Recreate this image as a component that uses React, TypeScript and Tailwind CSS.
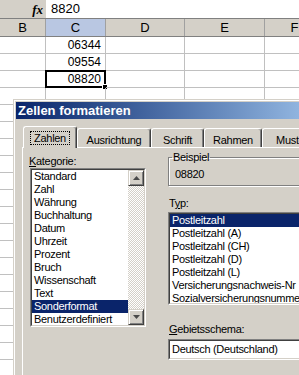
import React from 'react';

const columns = [
  { letter: 'B', width: 'w-[46px]' },
  { letter: 'C', width: 'w-[60px]' },
  { letter: 'D', width: 'w-[79px]' },
  { letter: 'E', width: 'w-[80px]' },
  { letter: 'F', width: 'w-[60px]' },
];

const values: Record<number, string> = { 0: '06344', 1: '09554', 2: '08820' };
const rows = Array.from({ length: 20 }, (_, i) => i);

const kategorien = [
  'Standard',
  'Zahl',
  'Währung',
  'Buchhaltung',
  'Datum',
  'Uhrzeit',
  'Prozent',
  'Bruch',
  'Wissenschaft',
  'Text',
  'Sonderformat',
  'Benutzerdefiniert',
];

const typen = [
  'Postleitzahl',
  'Postleitzahl (A)',
  'Postleitzahl (CH)',
  'Postleitzahl (D)',
  'Postleitzahl (L)',
  'Versicherungsnachweis-Nr',
  'Sozialversicherungsnummer',
];

const tabs = [
  { label: 'Zahlen', width: 'w-[54px]', active: true },
  { label: 'Ausrichtung', width: 'w-[74px]' },
  { label: 'Schrift', width: 'w-[53px]' },
  { label: 'Rahmen', width: 'w-[58px]' },
  { label: 'Muster', width: 'w-[60px]' },
];

function Sheet() {
  return (
    <div className="flex flex-col">
      {/* formula bar */}
      <div className="flex h-[19px] border-b border-[#808080] bg-[#d4d0c8]">
        <div className="w-[46px] shrink-0 flex items-center justify-end pr-[3px]">
          <span className="font-['Liberation_Serif',serif] italic font-bold text-[13px] leading-none">fx</span>
        </div>
        <div className="flex-1 bg-white flex items-center pl-[5px] text-[13px]">8820</div>
      </div>
      {/* column headers */}
      <div className="flex h-[18px] border-b border-[#808080] bg-[#d4d0c8]">
        {columns.map((c) => (
          <div
            key={c.letter}
            className={`${c.width} shrink-0 border-r border-[#a0a0a0] flex items-center justify-center text-[13px] ${
              c.letter === 'C' ? 'bg-[#b9c7e2]' : ''
            }`}
          >
            {c.letter}
          </div>
        ))}
      </div>
      {rows.map((r) => (
        <div key={r} className="flex h-[17px]">
          {columns.map((c) => (
            <div
              key={c.letter}
              className={`${c.width} shrink-0 relative border-r border-b border-[#c0c0c0] flex items-center justify-end pr-[4px] text-[12px]`}
            >
              {c.letter === 'C' && values[r]}
              {c.letter === 'C' && r === 2 && (
                <>
                  <div className="absolute -left-px -top-px w-[61px] h-[18px] border-2 border-black" />
                  <div className="absolute -right-[3px] -bottom-[3px] w-[6px] h-[6px] bg-black border border-white" />
                </>
              )}
            </div>
          ))}
        </div>
      ))}
    </div>
  );
}

function Arrow({ up }: { up?: boolean }) {
  return (
    <svg width="7" height="4" viewBox="0 0 7 4">
      {up ? <path d="M3.5 0 L7 4 L0 4 Z" fill="#4a4a4a" /> : <path d="M0 0 L7 0 L3.5 4 Z" fill="#4a4a4a" />}
    </svg>
  );
}

function ScrollButton({ up }: { up?: boolean }) {
  return (
    <div className="h-[16px] shrink-0 bg-[#d4d0c8] border border-t-[#d4d0c8] border-l-[#d4d0c8] border-r-[#404040] border-b-[#404040] shadow-[inset_1px_1px_0_#fff,inset_-1px_-1px_0_#808080] flex items-center justify-center">
      <Arrow up={up} />
    </div>
  );
}

function ListBox({
  items,
  selected,
  className,
  scroll,
}: {
  items: string[];
  selected: string;
  className: string;
  scroll?: boolean;
}) {
  return (
    <div className={`border border-t-[#808080] border-l-[#808080] border-r-white border-b-white ${className}`}>
      <div className="h-full border border-t-[#404040] border-l-[#404040] border-r-[#d4d0c8] border-b-[#d4d0c8] bg-white flex overflow-hidden">
        <div className="flex-1 flex flex-col overflow-hidden">
          {items.map((it) => (
            <div
              key={it}
              className={`h-[13px] shrink-0 leading-[13px] pl-[2px] whitespace-nowrap ${
                it === selected ? 'bg-[#0a246a] text-white' : ''
              }`}
            >
              {it}
            </div>
          ))}
        </div>
        {scroll && (
          <div className="w-[16px] shrink-0 flex flex-col">
            <ScrollButton up />
            <div className="flex-1 bg-[repeating-conic-gradient(#d4d0c8_0%_25%,#ffffff_0%_50%)] bg-size-[2px_2px]" />
            <ScrollButton />
          </div>
        )}
      </div>
    </div>
  );
}

function Dialog() {
  return (
    <div className="absolute left-[13px] top-[99px] w-[330px] h-[300px] bg-[#d4d0c8] border border-t-[#d4d0c8] border-l-[#d4d0c8] border-r-[#404040] border-b-[#404040] text-[11px] tracking-[-0.3px] text-black">
      <div className="h-full border border-t-white border-l-white border-r-[#808080] border-b-[#808080] p-px">
        <div className="h-[17px] bg-linear-to-r from-[#0a246a] to-[#a6caf0] flex items-center pl-[2px] text-white font-bold text-[13px] tracking-normal">
          Zellen formatieren
        </div>

        <div className="mt-[7px] ml-[7px] flex items-end">
          {tabs.map((t) =>
            t.active ? (
              <div
                key={t.label}
                className={`${t.width} shrink-0 h-[22px] -mb-px relative z-10 bg-[#d4d0c8] rounded-t-[3px] border-t border-l border-white border-r border-r-[#404040] shadow-[inset_-1px_0_0_#808080] flex items-start justify-center pt-[4px]`}
              >
                <span className="border border-dotted border-black px-[3px] leading-[12px]">{t.label}</span>
              </div>
            ) : (
              <div
                key={t.label}
                className={`${t.width} shrink-0 h-[19px] rounded-t-[3px] border-t border-l border-white border-r border-r-[#404040] shadow-[inset_-1px_0_0_#808080] flex items-start justify-center pt-[3px] whitespace-nowrap`}
              >
                {t.label}
              </div>
            )
          )}
        </div>

        <div className="ml-[6px] h-[240px] border border-t-white border-l-white border-r-[#404040] border-b-[#404040] flex pl-[7px] pt-[2px]">
          <div className="w-[116px] shrink-0 pt-[4px]">
            <div className="h-[14px] leading-[14px] -ml-px">
              <span className="underline">K</span>ategorie:
            </div>
            <ListBox items={kategorien} selected="Sonderformat" className="w-[116px] h-[159px]" scroll />
          </div>

          <div className="flex-1 ml-[22px] mr-[8px] flex flex-col">
            <fieldset className="border border-[#808080] shadow-[inset_1px_1px_0_#fff,1px_1px_0_#fff] px-[3px] pb-[4px]">
              <legend className="px-px h-[14px] leading-[14px]">Beispiel</legend>
              <div className="mt-[4px] ml-[3px] leading-[13px]">08820</div>
            </fieldset>

            <div className="mt-[10px] h-[14px] leading-[14px] pl-px">
              T<span className="underline">y</span>p:
            </div>
            <ListBox items={typen} selected="Postleitzahl" className="mt-[2px] h-[93px]" />

            <div className="mt-[17px] h-[14px] leading-[14px] pl-px">
              <span className="underline">G</span>ebietsschema:
            </div>
            <div className="mt-[3px] h-[21px] border border-t-[#808080] border-l-[#808080] border-r-white border-b-white">
              <div className="h-full border border-t-[#404040] border-l-[#404040] border-r-[#d4d0c8] border-b-[#d4d0c8] bg-white flex items-center pl-[2px]">
                Deutsch (Deutschland)
              </div>
            </div>
          </div>
        </div>
      </div>
    </div>
  );
}

export default function App() {
  return (
    <div className="relative w-[299px] h-[375px] overflow-hidden bg-white font-['Liberation_Sans',Arial,sans-serif] text-black">
      <Sheet />
      <Dialog />
    </div>
  );
}
